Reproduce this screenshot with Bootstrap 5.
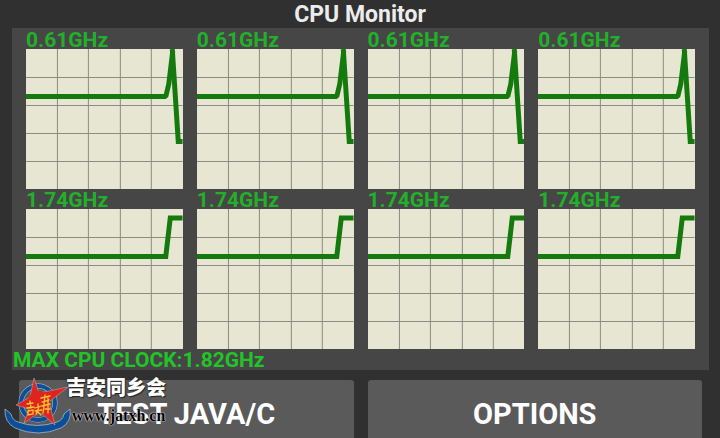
<!DOCTYPE html>
<html lang="en">
<head>
<meta charset="utf-8">
<meta name="viewport" content="width=device-width, initial-scale=1">
<title>CPU Monitor</title>
<link rel="stylesheet" href="https://cdn.jsdelivr.net/npm/bootstrap@5.3.0/dist/css/bootstrap.min.css">
<style>
body { background: #303030; font-family: Roboto, "Noto Sans CJK SC", sans-serif; font-weight: 500; }
.page-title { font-size: 23px; line-height: 26px; padding-top: 2px; font-weight: 700; color: #ececec; }
.monitor { background: #464646; margin: 0 11px 0 12px; }
.graphs { padding: 0 14px; column-gap: 14px; display: grid; grid-template-columns: repeat(4, minmax(0, 1fr)); }
.clock { color: #22b02a; font-size: 21px; font-weight: 700; line-height: 20px; padding-top: 2px; height: 21px; }
.clock + svg { height: 140px; }
.graphs figure:nth-child(n+5) .clock { height: 20px; padding-top: 1px; }
.max-clock { color: #22c428; font-size: 21px; font-weight: 700; line-height: 20px; padding: 1px 0 0 1px; }
.plot { background: #e6e6d2; }
.lines { stroke: #8b8c82; stroke-width: 1; }
.trace { stroke: #157a0d; stroke-width: 5; fill: none; }
.actions { padding: 10px 18px 0 19px; gap: 14px; }
.action { background: #5a5a5b; color: #fff; font-size: 29px; line-height: 32px; padding: 18px 0; font-weight: 700; border: 0; border-radius: 3px; }
.action:hover { background: #666; color: #fff; }
.watermark { left: 4px; bottom: 0; height: 70px; pointer-events: none; }
.brand-text { padding-top: 8px; margin-left: -6px; }
.brand-cn { font-size: 20px; line-height: 24px; font-weight: 900; color: #fff; text-shadow: 1px 1px 1px #222, -1px 0 1px #333; }
.brand-url { font-family: "Liberation Serif", serif; font-weight: 700; font-size: 16px; line-height: 24px; color: #000; text-shadow: 0 0 1px #fff, 0 0 1px #ddd, 0 0 2px #aaa; padding-left: 6px; margin-top: 4px; }
</style>
<script src="https://cdn.jsdelivr.net/npm/bootstrap@5.3.0/dist/js/bootstrap.bundle.min.js"></script>
</head>
<body class="vh-100 overflow-hidden position-relative">
<svg width="0" height="0" class="position-absolute" aria-hidden="true">
  <defs>
    <g id="grid"><path class="lines" d="M31.5 0V140M62.5 0V140M94.5 0V140M125.5 0V140M0 28.5H157M0 56.5H157M0 84.5H157M0 112.5H157"/></g>
    <symbol id="spike" viewBox="0 0 157 140" preserveAspectRatio="none"><use href="#grid"/><path class="trace" stroke-linejoin="bevel" d="M0 47.500H140L143 35L147 2"/><path class="trace" d="M146.500 0L152.500 92.500H157"/></symbol>
    <symbol id="step" viewBox="0 0 157 140" preserveAspectRatio="none"><use href="#grid"/><path class="trace" d="M0 47.500H140L144.500 9H157"/></symbol>
  </defs>
</svg>
<h1 class="page-title text-center m-0">CPU Monitor</h1>
<main>
  <section class="monitor">
    <div class="graphs">
      <figure class="m-0"><figcaption class="clock">0.61GHz</figcaption><svg class="plot d-block w-100"><use href="#spike"/></svg></figure>
      <figure class="m-0"><figcaption class="clock">0.61GHz</figcaption><svg class="plot d-block w-100"><use href="#spike"/></svg></figure>
      <figure class="m-0"><figcaption class="clock">0.61GHz</figcaption><svg class="plot d-block w-100"><use href="#spike"/></svg></figure>
      <figure class="m-0"><figcaption class="clock">0.61GHz</figcaption><svg class="plot d-block w-100"><use href="#spike"/></svg></figure>
      <figure class="m-0"><figcaption class="clock">1.74GHz</figcaption><svg class="plot d-block w-100"><use href="#step"/></svg></figure>
      <figure class="m-0"><figcaption class="clock">1.74GHz</figcaption><svg class="plot d-block w-100"><use href="#step"/></svg></figure>
      <figure class="m-0"><figcaption class="clock">1.74GHz</figcaption><svg class="plot d-block w-100"><use href="#step"/></svg></figure>
      <figure class="m-0"><figcaption class="clock">1.74GHz</figcaption><svg class="plot d-block w-100"><use href="#step"/></svg></figure>
    </div>
    <p class="max-clock m-0">MAX CPU CLOCK:1.82GHz</p>
  </section>
  <div class="actions d-flex">
    <button type="button" class="action btn flex-fill w-50">TEST JAVA/C</button>
    <button type="button" class="action btn flex-fill w-50">OPTIONS</button>
  </div>
</main>
<div class="watermark position-absolute d-flex">
  <svg width="68" height="68" viewBox="0 0 68 68" class="flex-shrink-0" aria-hidden="true">
    <circle cx="34" cy="35" r="17" fill="none" stroke="#b8c4ce" stroke-width="5"/>
    <path fill="#0b4f9a" stroke="#b8c4ce" stroke-width=".7" stroke-linejoin="round" d="M1 41L7 46Q8 52 14 54Q33 61 53 54Q59 52 60 46L66 41Q68 54 57 60Q34 70 11 60Q0 54 1 41Z"/>
    <circle cx="34" cy="35" r="17" fill="none" stroke="#0b4f9a" stroke-width="4"/>
    <path fill="#df231f" stroke="#c9b4b4" stroke-width=".5" stroke-linejoin="round" d="M30 10L35 25L64 19L45 34L51 57L36 44L20 55L25 41L12 37L26 29Z"/>
    <circle cx="35" cy="34" r="11" fill="#df231f"/>
    <g stroke="#f7c52f" stroke-width="1.300" fill="none" stroke-linecap="round">
      <path d="M23 36L29 35M26 33L27 40M23 40L30 39M24 43L29 42L29 46L24 47ZM31 40L37 38M34 36V39M31 43L38 42M35 39L32 46M33 43L37 47"/>
      <path d="M37 30L46 28M38 34L45 32M41 27L40 37M38 38L46 36M44 30V45M40 38L39 45M41 41H46"/>
    </g>
  </svg>
  <div class="brand-text text-nowrap"><div class="brand-cn" lang="zh">吉安同乡会</div><div class="brand-url">www.jatxh.cn</div></div>
</div>
</body>
</html>
